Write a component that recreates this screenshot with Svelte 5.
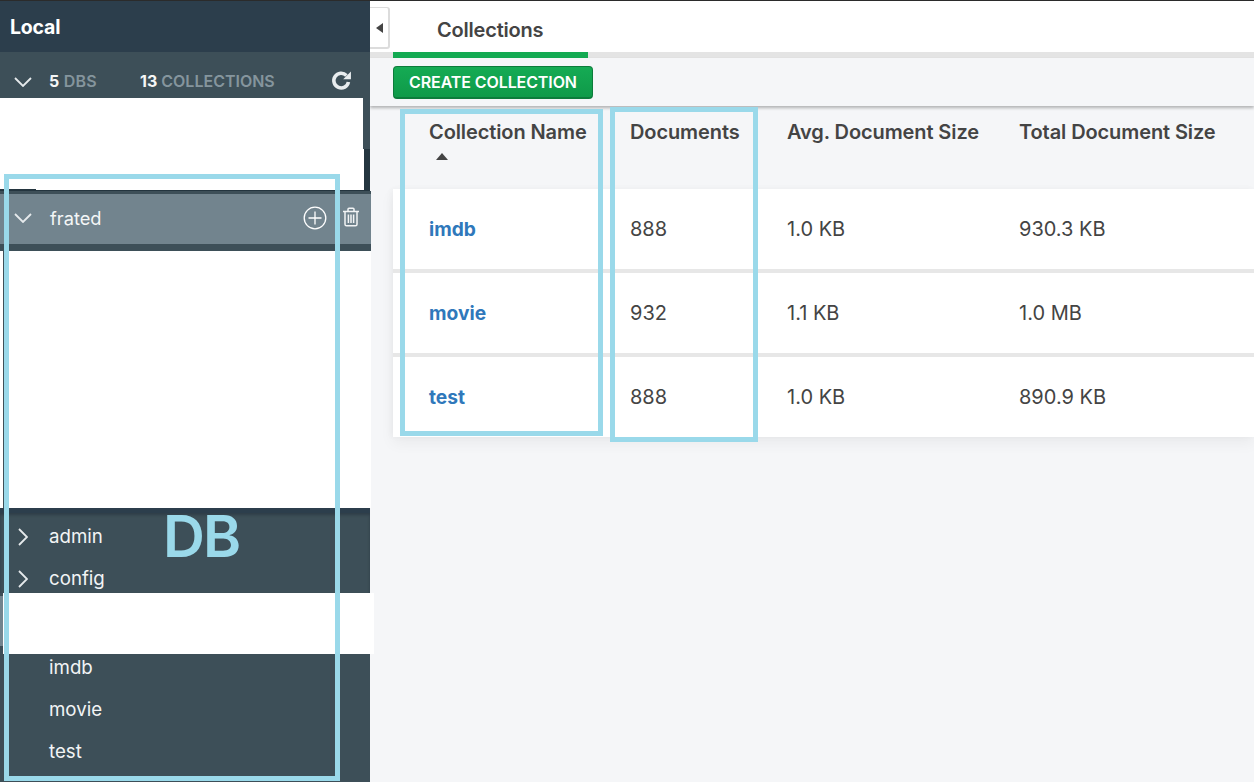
<script>
  const rows = [
    { name: 'imdb', docs: '888', avg: '1.0 KB', total: '930.3 KB' },
    { name: 'movie', docs: '932', avg: '1.1 KB', total: '1.0 MB' },
    { name: 'test', docs: '888', avg: '1.0 KB', total: '890.9 KB' }
  ];
</script>

<div class="page">
  <aside class="side">
    <header class="local">Local</header>
    <div class="stats">
      <svg class="chev" viewBox="0 0 18 10"><path d="M1 1l8 8 8-8" /></svg>
      <span class="stat one"><b>5</b> DBS</span>
      <span class="stat two"><b>13</b> COLLECTIONS</span>
      <svg class="refresh" viewBox="0 0 20 20"><path d="M16.6 11.4a7 7 0 1 1-1.9-6.2" /><path class="fill" d="M19 1.4v7.4h-7.4z" /></svg>
    </div>
    <div class="hide-top">
      <div class="hide-a"></div>
      <div class="hide-b"></div>
      <div class="hide-c"></div>
    </div>
    <div class="db-active">
      <svg class="chev" viewBox="0 0 18 10"><path d="M1 1l8 8 8-8" /></svg>
      <span class="db-name">frated</span>
      <svg class="plus" viewBox="0 0 24 24"><circle cx="12" cy="12" r="10.8" /><path d="M12 5.5v13M5.5 12h13" /></svg>
      <svg class="trash" viewBox="0 0 18 20"><path d="M1 4.5h16M6 4.5V2.2c0-.7.4-1 1-1h4c.6 0 1 .3 1 1v2.3M3 4.5v12.7c0 1 .7 1.6 1.6 1.6h8.8c.9 0 1.6-.6 1.6-1.6V4.5M6.4 7.5v8.5M9 7.5v8.5M11.6 7.5v8.5" /></svg>
    </div>
    <div class="blank-1"></div>
    <div class="db-list">
      <div class="db-row"><svg class="chev-r" viewBox="0 0 10 18"><path d="M1 1l8 8-8 8" /></svg><span>admin</span></div>
      <div class="db-row"><svg class="chev-r" viewBox="0 0 10 18"><path d="M1 1l8 8-8 8" /></svg><span>config</span></div>
    </div>
    <div class="blank-2"><div class="blank-2-fill"></div></div>
    <div class="coll-list">
      <div class="db-row">imdb</div>
      <div class="db-row">movie</div>
      <div class="db-row">test</div>
    </div>
  </aside>

  <main class="main">
    <button class="collapse" aria-label="Collapse"><span class="tri-left"></span></button>
    <nav class="tabs"><span class="tab">Collections</span></nav>
    <div class="toolbar"><button class="create">CREATE COLLECTION</button></div>
    <div class="table-wrap">
      <div class="grid head">
        <div class="cell">Collection Name<span class="sort"></span></div>
        <div class="cell">Documents</div>
        <div class="cell">Avg. Document Size</div>
        <div class="cell">Total Document Size</div>
      </div>
      <div class="body">
        {#each rows as r}
          <div class="grid row">
            <a class="name" href="#top">{r.name}</a>
            <span>{r.docs}</span>
            <span>{r.avg}</span>
            <span>{r.total}</span>
          </div>
        {/each}
      </div>
    </div>
  </main>

  <div class="mark m1"></div>
  <div class="mark m2"></div>
  <div class="mark m3"></div>
  <div class="mark-label">DB</div>
</div>

<style>
  :global(body) { margin: 0; background: #f5f6f8; }
  .page {
    position: relative; display: flex; width: 1254px; height: 782px; overflow: hidden;
    font-family: Inter, "Liberation Sans", sans-serif; color: #444;
    border-top: 1px solid #2b2b2b; box-sizing: border-box;
  }
  .side { width: 370px; flex: none; display: flex; flex-direction: column; background: #3d4f58; color: #fff; height: 781px; position: relative; z-index: 3; }
  .local {
    height: 51px; flex: none; box-sizing: border-box; background: #2c3e4c; padding: 15px 0 0 10px;
    font-size: 19.5px; font-weight: 700; line-height: 22px; letter-spacing: -.2px;
  }
  .stats { height: 46px; flex: none; display: flex; align-items: center; position: relative; font-size: 16px; color: #85959d; font-weight: 600; }
  .stats b { color: #f5f6f6; font-weight: 700; }
  .stat.one { position: absolute; left: 49px; top: 19px; line-height: 20px; letter-spacing: .2px; }
  .stat.two { position: absolute; left: 140px; top: 19px; line-height: 20px; }
  .chev { width: 18px; height: 10px; margin-left: 14px; fill: none; stroke: #e6eaec; stroke-width: 1.8; flex: none; }
  .stats .chev { margin-top: 13px; }
  .refresh { position: absolute; left: 331px; top: 18px; width: 21px; height: 21px; fill: none; stroke: #e8ecee; stroke-width: 3.4; }
  .refresh .fill { fill: #e8ecee; stroke: none; }
  .hide-top { height: 93px; flex: none; background: linear-gradient(#3d4f58 51px, #24353f 51px); }
  .hide-a { height: 51px; width: 363px; background: #fff; }
  .hide-b { height: 40px; width: 364px; background: #fff; }
  .hide-c { height: 1px; width: 328px; margin-left: 36px; background: #fff; }
  .db-active {
    height: 60px; box-sizing: border-box; flex: none; display: flex; align-items: center; background: #72848e;
    border-top: 3px solid #3d4f58; border-bottom: 7px solid #3d4f58; font-size: 18.3px; width: 371px;
  }
  .db-active .chev { margin-top: -2px; }
  .db-name { margin-left: 18px; color: #f4f6f6; margin-top: -2px; }
  .plus { width: 24px; height: 24px; margin: -2px 0 0 auto; fill: none; stroke: #fff; stroke-width: 1.3; }
  .trash { width: 18px; height: 20px; margin: 0 11px 4px 15px; fill: none; stroke: #f2f4f5; stroke-width: 1.5; }
  .blank-1 { height: 257px; flex: none; width: 371px; background: linear-gradient(90deg, #fff 3px, #3d4f58 3px, #3d4f58 4px, #fff 4px); }
  .db-list { height: 85px; flex: none; border-top: 5px solid #2c3e4c; box-sizing: border-box; box-shadow: inset 0 2px 3px rgba(20,30,40,.35); padding-top: 2px; }
  .db-row { height: 42px; display: flex; align-items: center; padding-left: 49px; font-size: 18.7px; color: #f2f4f5; position: relative; }
  .chev-r { position: absolute; left: 18px; top: 13px; width: 10px; height: 18px; fill: none; stroke: #e6eaec; stroke-width: 1.8; }
  .blank-2 { height: 61px; flex: none; width: 374px; background: linear-gradient(#3d4f58 3px, #72848e 3px, #72848e 53px, #3d4f58 53px); position: relative; z-index: 1; }
  .blank-2-fill { height: 61px; margin-left: 3px; background: #fff; }
  .coll-list { margin-top: -8px; flex: 1; position: relative; }
  .main { flex: 1; min-width: 0; position: relative; display: flex; flex-direction: column; background: #f5f6f8; }
  .collapse {
    position: absolute; left: 0; top: 6px; width: 20px; height: 42px; padding: 0; box-sizing: border-box; z-index: 2;
    background: #fff; border: 1px solid #dcdcdc; border-width: 1px 2px 2px 0; border-radius: 0 3px 3px 0; display: flex; align-items: center; justify-content: center;
  }
  .tri-left { width: 0; height: 0; border: 5.5px solid transparent; border-left: 0; border-right: 7px solid #444; }
  .tabs { height: 57px; flex: none; box-sizing: border-box; background: #fff; border-bottom: 6px solid #e4e4e4; position: relative; padding: 17px 0 0 67px; }
  .tab { font-size: 20px; font-weight: 600; line-height: 24px; color: #444; display: block; letter-spacing: -.2px; }
  .tabs::after { content: ""; position: absolute; left: 23px; bottom: -6px; width: 195px; height: 6px; background: #13aa52; }
  .toolbar { height: 48px; flex: none; box-sizing: border-box; padding: 8px 0 0 23px; box-shadow: 0 2px 3px rgba(0,0,0,.28); position: relative; z-index: 1; background: #f5f6f8; }
  .create {
    width: 200px; height: 33px; padding: 0; font: 600 16px/1 Inter, "Liberation Sans", sans-serif; letter-spacing: -.1px; color: #fff;
    background: linear-gradient(#15ab54, #0f9a49); border: 1px solid #0c7c3b; border-bottom-width: 2px; border-radius: 4px; display: block;
  }
  .table-wrap { margin-left: 23px; }
  .grid { display: grid; grid-template-columns: 201px 157px 232px 1fr; padding-left: 36px; column-gap: 0; }
  .head { height: 83px; box-sizing: border-box; padding-top: 14px; font-weight: 600; font-size: 20px; line-height: 24px; color: #444; white-space: nowrap; letter-spacing: -.1px; }
  .sort { display: block; width: 0; height: 0; margin: 9px 0 0 7px; border: 6.5px solid transparent; border-top: 0; border-bottom: 7px solid #444; }
  .body { background: #fff; box-shadow: 0 6px 14px rgba(0,0,0,.05), -2px 0 6px rgba(0,0,0,.03); }
  .row { height: 84px; box-sizing: border-box; align-items: center; border-top: 4px solid #e7e7e7; font-size: 20px; color: #444; }
  .row:first-child { border-top: 0; height: 80px; }
  .name { color: #2f78bb; font-weight: 700; text-decoration: none; font-size: 19.2px; }
  .mark { position: absolute; box-sizing: border-box; border: 5px solid #9ad9ea; pointer-events: none; z-index: 5; }
  .m1 { left: 4px; top: 173px; width: 336px; height: 607px; }
  .m2 { left: 400px; top: 108px; width: 203px; height: 327px; }
  .m3 { left: 610px; top: 106px; width: 148px; height: 335px; }
  .mark-label { position: absolute; left: 163px; top: 505px; font-size: 58px; line-height: 60px; font-weight: 600; color: #9ad9ea; letter-spacing: -2px; z-index: 5; }
</style>
